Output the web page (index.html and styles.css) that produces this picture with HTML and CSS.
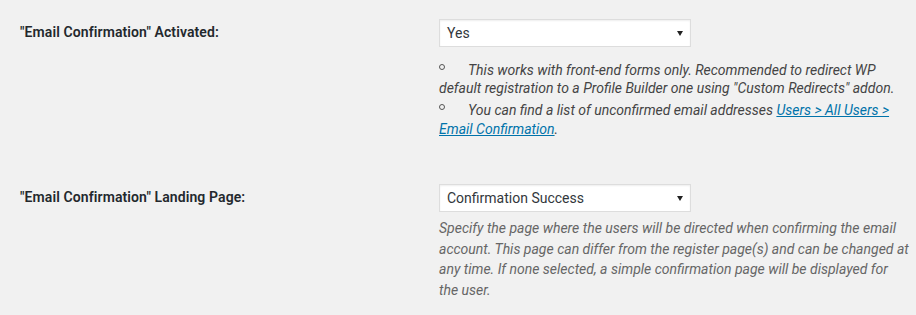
FILE: index.html
```html
<!DOCTYPE html>
<html>
<head>
<meta charset="utf-8">
<link rel="stylesheet" href="styles.css">
</head>
<body>
<div class="form-table">
  <div class="row row-first">
    <div class="label">"Email Confirmation" Activated:</div>
    <div class="field">
      <div class="select"><span class="select-text">Yes</span><span class="arrow"></span></div>
      <ul class="notes">
        <li>This works with front-end forms only. Recommended to redirect WP default registration to a Profile Builder one using "Custom Redirects" addon.</li>
        <li>You can find a list of unconfirmed email addresses <a href="#">Users &gt; All Users &gt; Email Confirmation</a>.</li>
      </ul>
    </div>
  </div>
  <div class="row row-second">
    <div class="label">"Email Confirmation" Landing Page:</div>
    <div class="field">
      <div class="select"><span class="select-text">Confirmation Success</span><span class="arrow"></span></div>
      <p class="description">Specify the page where the users will be directed when confirming the email account. This page can differ from the register page(s) and can be changed at any time. If none selected, a simple confirmation page will be displayed for the user.</p>
    </div>
  </div>
</div>
</body>
</html>
```
FILE: styles.css
```css
html, body {
  margin: 0;
  padding: 0;
  background: #f1f1f1;
}
body {
  font-family: Roboto, "Liberation Sans", sans-serif;
  color: #444;
  font-size: 14px;
}
.form-table {
  padding-left: 20px;
}
.row {
  display: grid;
  grid-template-columns: 419px 470px;
}
.row-first {
  padding-top: 19px;
}
.row-second {
  padding-top: 42px;
}
.label {
  font-size: 14px;
  font-weight: 600;
  color: #23282d;
  line-height: 18px;
  padding-top: 4px;
  letter-spacing: 0.1px;
}
.select {
  box-sizing: border-box;
  width: 252px;
  height: 28px;
  background: #fff;
  border: 1px solid #ddd;
  box-shadow: inset 0 1px 2px rgba(0,0,0,0.07);
  display: flex;
  align-items: center;
  justify-content: space-between;
  padding: 0 6px 0 7px;
}
.select-text {
  font-size: 14px;
  color: #32373c;
}
.arrow {
  width: 0;
  height: 0;
  border-left: 3px solid transparent;
  border-right: 3px solid transparent;
  border-top: 5px solid #222;
  margin-right: 1px;
  margin-top: 1px;
}
.notes {
  list-style: none;
  margin: 14px 0 0;
  padding: 0;
  font-style: italic;
  line-height: 18.2px;
  color: #444;
}
.notes li {
  margin-bottom: 4px;
}
.notes li::before {
  content: "";
  display: inline-block;
  box-sizing: border-box;
  width: 6px;
  height: 6px;
  border: 1px solid #555;
  border-radius: 50%;
  margin-right: 23px;
  vertical-align: 5px;
}
.notes a {
  color: #0073aa;
}
.description {
  margin: 6px 0 0;
  font-style: italic;
  color: #666;
  line-height: 20.8px;
}
```
